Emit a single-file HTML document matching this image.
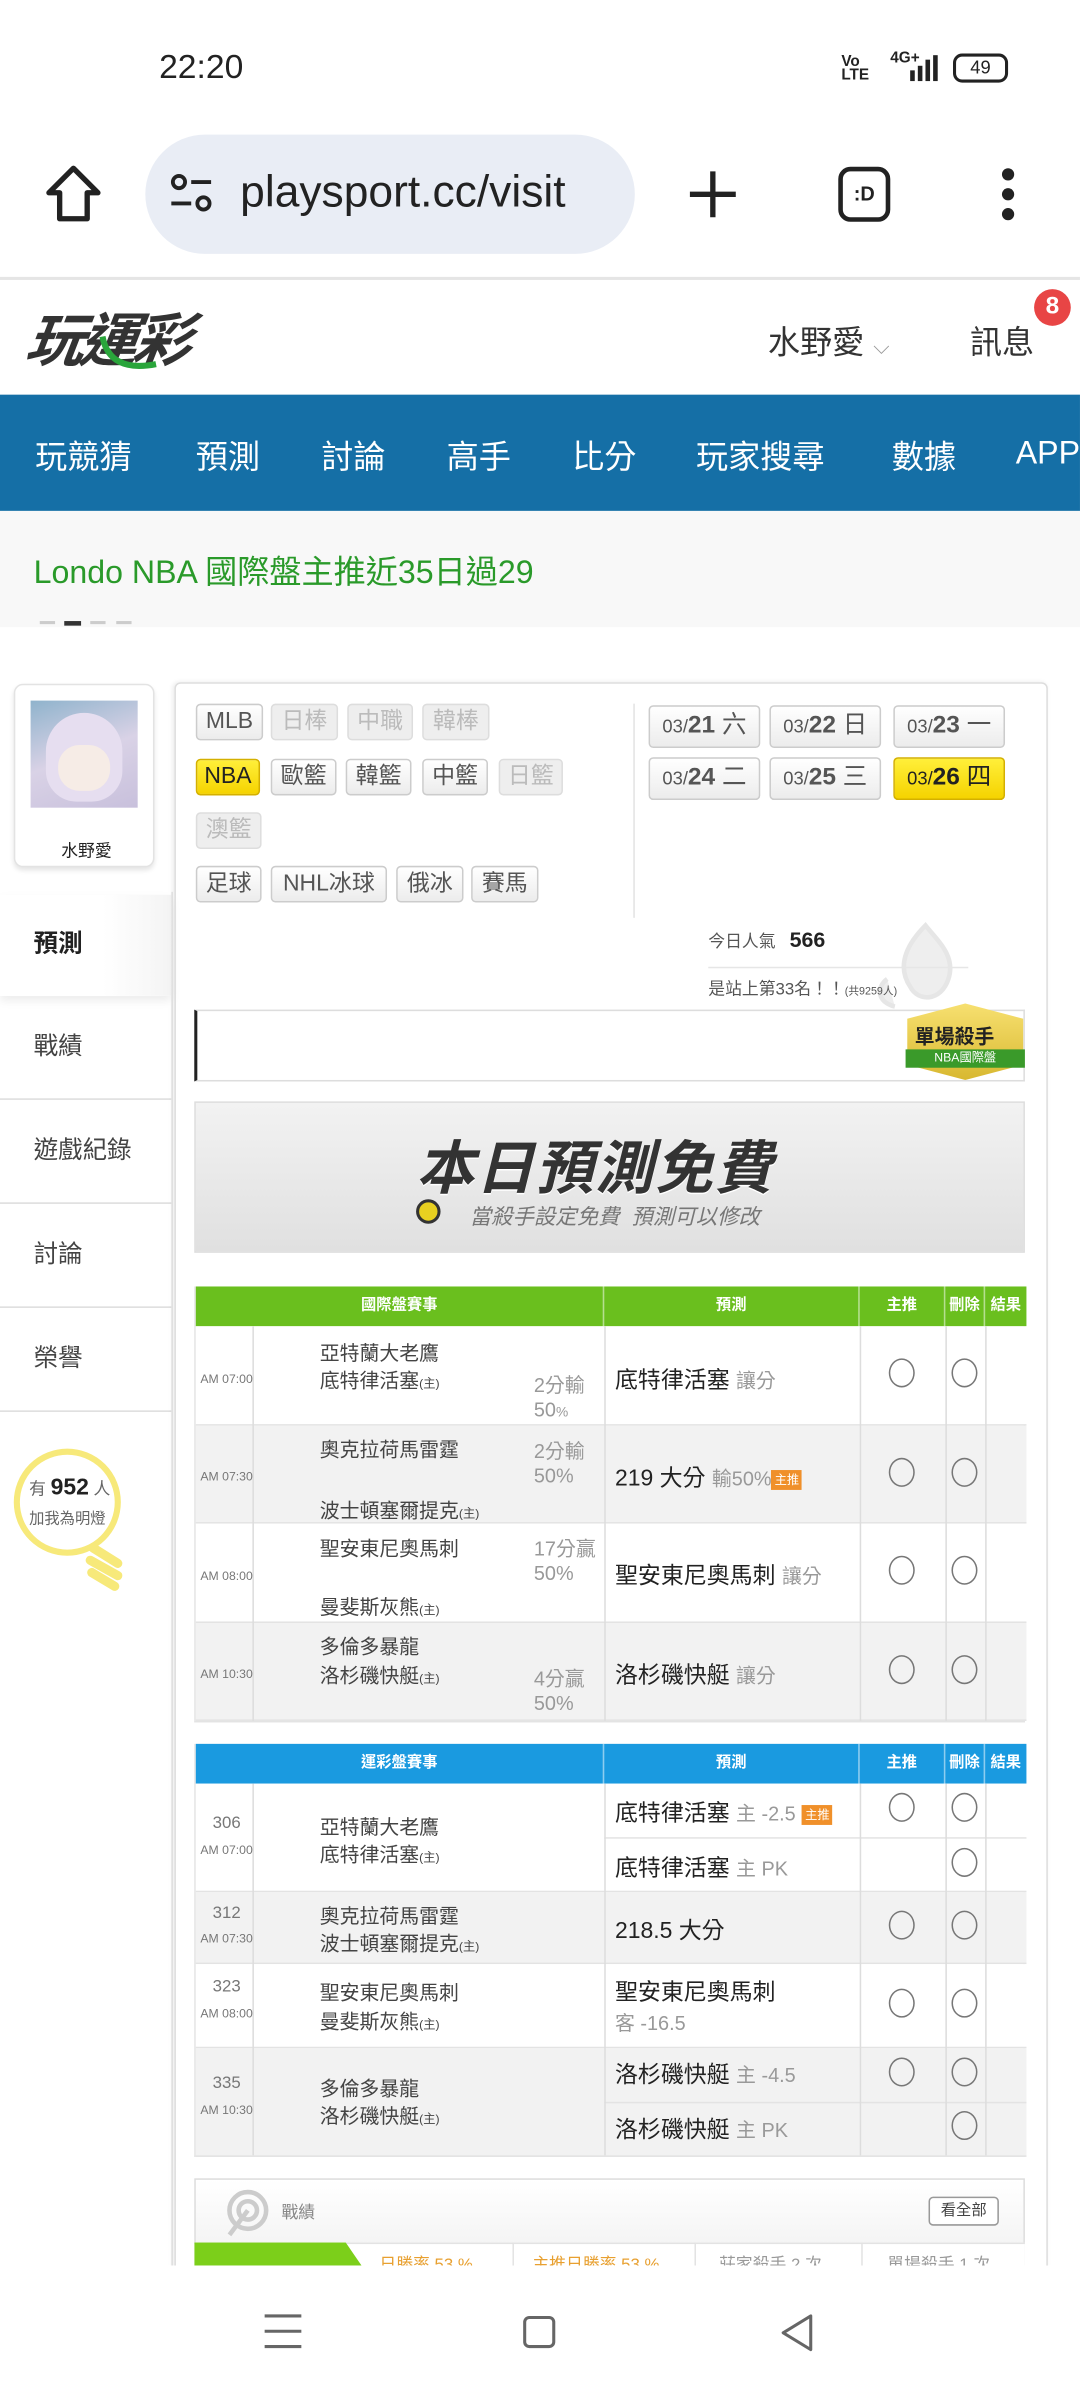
<!DOCTYPE html>
<html><head><meta charset="utf-8">
<style>
*{margin:0;padding:0;box-sizing:border-box}
html,body{width:1080px;height:2400px;overflow:hidden;background:#fff}
#w{position:absolute;left:0;top:0;width:706px;height:1569px;transform:scale(1.5297);transform-origin:0 0;font-family:"Liberation Sans","Noto Sans CJK TC",sans-serif;color:#333}
.a{position:absolute;white-space:nowrap}
.btn{position:absolute;height:24px;border:1px solid #ccc;border-radius:3px;background:linear-gradient(#fff,#ececec);font-size:15px;line-height:22px;text-align:center;color:#555}
.dis{color:#bbb;background:#eee;border-color:#ddd}
.yel{background:linear-gradient(#ffef3a,#f5d300)!important;border-color:#d4b000!important;color:#222!important}
.dt{position:absolute;height:28px;width:73px;border:1px solid #ccc;border-radius:3px;background:linear-gradient(#fff,#ececec);font-size:16px;line-height:26px;text-align:center;color:#555}
.dt small{font-size:12px}
.menu{position:absolute;left:0;width:112px;border-bottom:1px solid #ddd;font-size:16px;color:#444;padding-left:22px}
.tbl{position:absolute;left:127px;width:543px}
.hd{position:absolute;height:26px;color:#fff;font-size:10px;font-weight:bold;text-align:center;line-height:26px;border-right:1px solid rgba(255,255,255,.5)}
.row{position:absolute;left:0;width:543px;border-bottom:1px solid #e3e3e3}
.vl{position:absolute;top:0;bottom:0;width:1px;background:#ddd}
.c{position:absolute;width:17px;height:19px;border:1.5px solid #777;border-radius:50%}
.t{font-size:8px;color:#777}
.tm{font-size:13px;color:#444}
.tm s{text-decoration:none;font-size:8px}
.pr{font-size:15px;color:#222}
.g{color:#999}
.tag{display:inline-block;font-size:8px;background:#f0902a;color:#fff;padding:1px 2px;vertical-align:middle}
.nv{position:absolute;top:283px;font-size:21px;color:#fff;white-space:nowrap}
</style></head><body><div id="w">
<!-- status -->
<div class="a" style="left:104px;top:31px;font-size:22px;color:#222">22:20</div>
<div class="a" style="left:550px;top:36px;font-size:10px;font-weight:bold;line-height:9px;color:#222">Vo<br>LTE</div>
<div class="a" style="left:582px;top:33px;font-size:10px;font-weight:bold;color:#222">4G+</div>
<svg class="a" style="left:594px;top:36px" width="20" height="18"><rect x="1" y="10" width="3" height="7" fill="#222"/><rect x="6" y="7" width="3" height="10" fill="#222"/><rect x="11" y="3" width="3" height="14" fill="#222"/><rect x="16" y="0" width="3" height="17" fill="#222"/></svg>
<div class="a" style="left:623px;top:35px;width:36px;height:19px;border:2px solid #222;border-radius:6px;font-size:12px;text-align:center;line-height:15px;color:#222">49</div>
<!-- browser bar -->
<svg class="a" style="left:28px;top:106px" width="40" height="42"><path d="M20 4 L36 20 H29 V37 H11 V20 H4 Z" fill="none" stroke="#222" stroke-width="3.5" stroke-linejoin="round"/></svg>
<div class="a" style="left:95px;top:88px;width:320px;height:78px;border-radius:39px;background:#e9edf5"></div>
<svg class="a" style="left:110px;top:113px" width="32" height="28"><circle cx="7" cy="6" r="4" fill="none" stroke="#222" stroke-width="2.5"/><line x1="15" y1="6" x2="28" y2="6" stroke="#222" stroke-width="2.5"/><line x1="2" y1="20" x2="15" y2="20" stroke="#222" stroke-width="2.5"/><circle cx="23" cy="20" r="4" fill="none" stroke="#222" stroke-width="2.5"/></svg>
<div class="a" style="left:157px;top:110px;font-size:29px;color:#222;width:244px;overflow:hidden">playsport.cc/visit</div>
<svg class="a" style="left:449px;top:110px" width="34" height="34"><path d="M17 2V32M2 17H32" stroke="#222" stroke-width="3.5"/></svg>
<div class="a" style="left:548px;top:109px;width:34px;height:36px;border:3.5px solid #222;border-radius:8px;font-size:13px;font-weight:bold;text-align:center;line-height:29px;color:#222">:D</div>
<svg class="a" style="left:652px;top:109px" width="14" height="36"><circle cx="7" cy="5" r="4" fill="#222"/><circle cx="7" cy="18" r="4" fill="#222"/><circle cx="7" cy="31" r="4" fill="#222"/></svg>
<div class="a" style="left:0;top:181px;width:706px;height:2px;background:#e5e5e5"></div>
<!-- header -->
<div class="a" style="left:18px;top:192px;font-size:38px;font-weight:bold;font-style:italic;color:#333;letter-spacing:-3px;transform:skewX(-8deg)">玩運彩</div>
<svg class="a" style="left:62px;top:218px" width="50" height="30"><path d="M5 2 C8 18 20 24 40 20" fill="none" stroke="#2aa53b" stroke-width="4"/></svg>
<div class="a" style="left:502px;top:208px;font-size:21px;color:#333">水野愛 <span style="font-size:14px;color:#999">⌵</span></div>
<div class="a" style="left:634px;top:208px;font-size:21px;color:#333">訊息</div>
<div class="a" style="left:676px;top:189px;width:24px;height:24px;border-radius:12px;background:#e84545;color:#fff;font-size:16px;font-weight:bold;text-align:center;line-height:24px">8</div>
<!-- nav -->
<div class="a" style="left:0;top:258px;width:706px;height:76px;background:#156fa6"></div>
<div class="nv" style="left:23px">玩競猜</div>
<div class="nv" style="left:128px">預測</div>
<div class="nv" style="left:210px">討論</div>
<div class="nv" style="left:292px">高手</div>
<div class="nv" style="left:374px">比分</div>
<div class="nv" style="left:455px">玩家搜尋</div>
<div class="nv" style="left:583px">數據</div>
<div class="nv" style="left:664px;top:285px">APP</div>
<!-- banner -->
<div class="a" style="left:0;top:334px;width:706px;height:76px;background:#f8f8f8"></div>
<div class="a" style="left:22px;top:358px;font-size:21px;color:#2a9a2a">Londo NBA 國際盤主推近35日過29</div>
<div class="a" style="left:26px;top:406px;width:10px;height:2px;background:#ccc"></div>
<div class="a" style="left:42px;top:406px;width:11px;height:3px;background:#333"></div>
<div class="a" style="left:59px;top:406px;width:10px;height:2px;background:#ccc"></div>
<div class="a" style="left:76px;top:406px;width:10px;height:2px;background:#ccc"></div>
<!-- sidebar -->
<div class="a" style="left:9px;top:447px;width:92px;height:120px;border:1px solid #e3e3e3;border-radius:6px;box-shadow:0 2px 3px rgba(0,0,0,.1);background:#fff"></div>
<div class="a" style="left:20px;top:458px;width:70px;height:70px;background:linear-gradient(160deg,#8fb3cc,#d9d2e6 50%,#c8c0dc)"></div>
<div class="a" style="left:30px;top:466px;width:50px;height:58px;border-radius:25px 25px 20px 20px;background:#e6def0"></div>
<div class="a" style="left:38px;top:487px;width:34px;height:30px;border-radius:14px;background:#f6ece6"></div>
<div class="a" style="left:40px;top:548px;font-size:11px;color:#222">水野愛</div>
<div class="menu" style="top:585px;height:66px;line-height:66px;font-weight:bold;color:#222;background:linear-gradient(90deg,#fff 60%,#f4f4f4);box-shadow:0 3px 6px rgba(0,0,0,.08);border:none">預測</div>
<div class="menu" style="top:651px;height:68px;line-height:68px">戰績</div>
<div class="menu" style="top:719px;height:68px;line-height:68px">遊戲紀錄</div>
<div class="menu" style="top:787px;height:68px;line-height:68px">討論</div>
<div class="menu" style="top:855px;height:68px;line-height:68px">榮譽</div>
<div class="a" style="left:112px;top:583px;width:1px;height:900px;background:#e6e6e6"></div>
<svg class="a" style="left:5px;top:943px" width="85" height="105"><circle cx="39" cy="39" r="33" fill="none" stroke="#f7e97a" stroke-width="4"/><g stroke="#f7e97a" stroke-width="6" stroke-linecap="round"><line x1="56" y1="69" x2="72" y2="79"/><line x1="54" y1="77" x2="72" y2="87"/><line x1="55" y1="85" x2="70" y2="94"/></g></svg>
<div class="a" style="left:19px;top:964px;font-size:11px;color:#666">有 <b style="font-size:15px;color:#222">952</b> 人</div>
<div class="a" style="left:19px;top:984px;font-size:10px;color:#666">加我為明燈</div>
<!-- main panel -->
<div class="a" style="left:114px;top:446px;width:571px;height:1040px;border:1px solid #ddd;border-radius:4px;box-shadow:-1px 0 3px rgba(0,0,0,.08)"></div>
<div class="btn" style="left:128px;top:460px;width:44px">MLB</div>
<div class="btn dis" style="left:177px;top:460px;width:44px">日棒</div>
<div class="btn dis" style="left:227px;top:460px;width:43px">中職</div>
<div class="btn dis" style="left:276px;top:460px;width:44px">韓棒</div>
<div class="btn yel" style="left:128px;top:496px;width:42px">NBA</div>
<div class="btn" style="left:177px;top:496px;width:43px">歐籃</div>
<div class="btn" style="left:226px;top:496px;width:43px">韓籃</div>
<div class="btn" style="left:276px;top:496px;width:43px">中籃</div>
<div class="btn dis" style="left:326px;top:496px;width:42px">日籃</div>
<div class="btn dis" style="left:128px;top:531px;width:43px">澳籃</div>
<div class="btn" style="left:128px;top:566px;width:43px">足球</div>
<div class="btn" style="left:177px;top:566px;width:76px">NHL冰球</div>
<div class="btn" style="left:259px;top:566px;width:44px">俄冰</div>
<div class="btn" style="left:308px;top:566px;width:44px">賽馬</div>
<div class="a" style="left:414px;top:460px;width:1px;height:140px;background:#e3e3e3"></div>
<div class="dt" style="left:424px;top:461px"><small>03/</small><b>21</b> 六</div>
<div class="dt" style="left:503px;top:461px"><small>03/</small><b>22</b> 日</div>
<div class="dt" style="left:584px;top:461px"><small>03/</small><b>23</b> 一</div>
<div class="dt" style="left:424px;top:495px"><small>03/</small><b>24</b> 二</div>
<div class="dt" style="left:503px;top:495px"><small>03/</small><b>25</b> 三</div>
<div class="dt yel" style="left:584px;top:495px"><small>03/</small><b>26</b> 四</div>
<svg class="a" style="left:565px;top:600px" width="75" height="62"><path d="M40 5 C30 15 20 30 30 45 C35 55 50 55 55 40 C60 25 48 15 40 5 Z M15 40 C8 45 8 55 20 58" fill="#eee" stroke="#e6e6e6" stroke-width="3"/></svg>
<div class="a" style="left:463px;top:606px;font-size:11px;color:#555">今日人氣 &nbsp;&nbsp;<b style="font-size:14px;color:#222">566</b></div>
<div class="a" style="left:463px;top:632px;width:170px;height:1px;background:#e6e6e6"></div>
<div class="a" style="left:463px;top:638px;font-size:11px;color:#555">是站上第33名！！<span style="font-size:7px">(共9259人)</span></div>
<div class="a" style="left:127px;top:660px;width:543px;height:47px;border:1px solid #ddd;border-left:2px solid #222;background:#fff"></div>
<div class="a" style="left:593px;top:656px;width:76px;height:50px;background:linear-gradient(#f7e070,#d8b830);clip-path:polygon(50% 0,100% 20%,100% 80%,50% 100%,0 80%,0 20%)"></div>
<div class="a" style="left:598px;top:667px;font-size:13px;font-weight:bold;color:#222">單場殺手</div>
<div class="a" style="left:592px;top:686px;width:78px;height:12px;background:#3a9a2a;color:#fff;font-size:8px;text-align:center;line-height:12px">NBA國際盤</div>
<div class="a" style="left:127px;top:720px;width:543px;height:99px;border:1px solid #ddd;background:linear-gradient(#f2f2f2,#e0e0e0)"></div>
<div class="a" style="left:272px;top:733px;font-size:38px;font-weight:bold;font-style:italic;color:#333;letter-spacing:1px;text-shadow:0 1px 0 #fff">本日預測免費</div>
<div class="a" style="left:272px;top:784px;width:16px;height:16px;border-radius:8px;background:#e8d020;border:2px solid #333"></div>
<div class="a" style="left:307px;top:785px;font-size:14px;font-style:italic;color:#777">當殺手設定免費 &nbsp;預測可以修改</div>
<!-- table 1 -->
<div class="tbl" style="top:841px;height:285px;border:1px solid #e3e3e3;border-top:none">
<div class="hd" style="left:0;top:0;width:267px;background:#6abf1e">國際盤賽事</div>
<div class="hd" style="left:267px;top:0;width:167px;background:#6abf1e">預測</div>
<div class="hd" style="left:434px;top:0;width:56px;background:#6abf1e">主推</div>
<div class="hd" style="left:490px;top:0;width:26px;background:#6abf1e">刪除</div>
<div class="hd" style="left:516px;top:0;width:27px;background:#6abf1e;border:none">結果</div>
<div class="row" style="top:26px;height:65px;background:#fff"></div>
<div class="row" style="top:91px;height:64px;background:#f2f2f2"></div>
<div class="row" style="top:155px;height:65px;background:#fff"></div>
<div class="row" style="top:220px;height:64px;background:#f2f2f2"></div>
<div class="vl" style="left:37px;top:26px"></div><div class="vl" style="left:267px;top:26px"></div><div class="vl" style="left:434px;top:26px"></div><div class="vl" style="left:490px;top:26px"></div><div class="vl" style="left:516px;top:26px"></div>
<div class="a t" style="left:3px;top:56px">AM 07:00</div>
<div class="a tm" style="left:81px;top:33px">亞特蘭大老鷹</div>
<div class="a tm" style="left:81px;top:51px">底特律活塞<s>(主)</s></div>
<div class="a tm g" style="left:221px;top:54px">2分輸<br>50<s style="font-size:9px;text-decoration:none">%</s></div>
<div class="a pr" style="left:274px;top:50px">底特律活塞 <span class="g" style="font-size:13px">讓分</span></div>
<div class="a t" style="left:3px;top:120px">AM 07:30</div>
<div class="a tm" style="left:81px;top:96px">奧克拉荷馬雷霆</div>
<div class="a tm" style="left:81px;top:136px">波士頓塞爾提克<s>(主)</s></div>
<div class="a tm g" style="left:221px;top:97px">2分輸<br>50%</div>
<div class="a pr" style="left:274px;top:114px">219 大分 <span class="g" style="font-size:13px">輸50%</span><span class="tag">主推</span></div>
<div class="a t" style="left:3px;top:185px">AM 08:00</div>
<div class="a tm" style="left:81px;top:161px">聖安東尼奧馬刺</div>
<div class="a tm" style="left:81px;top:199px">曼斐斯灰熊<s>(主)</s></div>
<div class="a tm g" style="left:221px;top:161px">17分贏<br>50%</div>
<div class="a pr" style="left:274px;top:178px">聖安東尼奧馬刺 <span class="g" style="font-size:13px">讓分</span></div>
<div class="a t" style="left:3px;top:249px">AM 10:30</div>
<div class="a tm" style="left:81px;top:225px">多倫多暴龍</div>
<div class="a tm" style="left:81px;top:244px">洛杉磯快艇<s>(主)</s></div>
<div class="a tm g" style="left:221px;top:246px">4分贏<br>50%</div>
<div class="a pr" style="left:274px;top:243px">洛杉磯快艇 <span class="g" style="font-size:13px">讓分</span></div>
<div class="c" style="left:453px;top:47px"></div><div class="c" style="left:494px;top:47px"></div>
<div class="c" style="left:453px;top:112px"></div><div class="c" style="left:494px;top:112px"></div>
<div class="c" style="left:453px;top:176px"></div><div class="c" style="left:494px;top:176px"></div>
<div class="c" style="left:453px;top:241px"></div><div class="c" style="left:494px;top:241px"></div>
</div>
<!-- table 2 -->
<div class="tbl" style="top:1140px;height:270px;border:1px solid #e3e3e3;border-top:none">
<div class="hd" style="left:0;top:0;width:267px;background:#1a9ae0">運彩盤賽事</div>
<div class="hd" style="left:267px;top:0;width:167px;background:#1a9ae0">預測</div>
<div class="hd" style="left:434px;top:0;width:56px;background:#1a9ae0">主推</div>
<div class="hd" style="left:490px;top:0;width:26px;background:#1a9ae0">刪除</div>
<div class="hd" style="left:516px;top:0;width:27px;background:#1a9ae0;border:none">結果</div>
<div class="row" style="top:26px;height:71px;background:#fff"></div>
<div class="a" style="left:267px;top:61px;width:276px;height:1px;background:#e3e3e3"></div>
<div class="row" style="top:97px;height:47px;background:#f2f2f2"></div>
<div class="row" style="top:144px;height:55px;background:#fff"></div>
<div class="row" style="top:199px;height:71px;background:#f2f2f2"></div>
<div class="a" style="left:267px;top:234px;width:276px;height:1px;background:#e3e3e3"></div>
<div class="vl" style="left:37px;top:26px"></div><div class="vl" style="left:267px;top:26px"></div><div class="vl" style="left:434px;top:26px"></div><div class="vl" style="left:490px;top:26px"></div><div class="vl" style="left:516px;top:26px"></div>
<div class="a" style="left:11px;top:46px;font-size:11px;color:#777">306</div><div class="a t" style="left:3px;top:65px">AM 07:00</div>
<div class="a tm" style="left:81px;top:44px">亞特蘭大老鷹</div>
<div class="a tm" style="left:81px;top:62px">底特律活塞<s>(主)</s></div>
<div class="a pr" style="left:274px;top:34px">底特律活塞 <span class="g" style="font-size:13px">主 -2.5</span> <span class="tag">主推</span></div>
<div class="a pr" style="left:274px;top:70px">底特律活塞 <span class="g" style="font-size:13px">主 PK</span></div>
<div class="a" style="left:11px;top:105px;font-size:11px;color:#777">312</div><div class="a t" style="left:3px;top:123px">AM 07:30</div>
<div class="a tm" style="left:81px;top:102px">奧克拉荷馬雷霆</div>
<div class="a tm" style="left:81px;top:120px">波士頓塞爾提克<s>(主)</s></div>
<div class="a pr" style="left:274px;top:111px">218.5 大分</div>
<div class="a" style="left:11px;top:153px;font-size:11px;color:#777">323</div><div class="a t" style="left:3px;top:172px">AM 08:00</div>
<div class="a tm" style="left:81px;top:152px">聖安東尼奧馬刺</div>
<div class="a tm" style="left:81px;top:171px">曼斐斯灰熊<s>(主)</s></div>
<div class="a pr" style="left:274px;top:151px">聖安東尼奧馬刺</div>
<div class="a g" style="left:274px;top:172px;font-size:13px">客 -16.5</div>
<div class="a" style="left:11px;top:216px;font-size:11px;color:#777">335</div><div class="a t" style="left:3px;top:235px">AM 10:30</div>
<div class="a tm" style="left:81px;top:215px">多倫多暴龍</div>
<div class="a tm" style="left:81px;top:233px">洛杉磯快艇<s>(主)</s></div>
<div class="a pr" style="left:274px;top:205px">洛杉磯快艇 <span class="g" style="font-size:13px">主 -4.5</span></div>
<div class="a pr" style="left:274px;top:241px">洛杉磯快艇 <span class="g" style="font-size:13px">主 PK</span></div>
<div class="c" style="left:453px;top:32px"></div><div class="c" style="left:494px;top:32px"></div>
<div class="c" style="left:494px;top:68px"></div>
<div class="c" style="left:453px;top:109px"></div><div class="c" style="left:494px;top:109px"></div>
<div class="c" style="left:453px;top:160px"></div><div class="c" style="left:494px;top:160px"></div>
<div class="c" style="left:453px;top:205px"></div><div class="c" style="left:494px;top:205px"></div>
<div class="c" style="left:494px;top:240px"></div>
</div>
<!-- record box -->
<div class="a" style="left:127px;top:1424px;width:543px;height:60px;border:1px solid #ddd;background:linear-gradient(#fff,#f0f0f0)"></div>
<svg class="a" style="left:146px;top:1431px" width="30" height="32"><circle cx="16" cy="14" r="12" fill="none" stroke="#ccc" stroke-width="3"/><circle cx="16" cy="14" r="6" fill="none" stroke="#ccc" stroke-width="3"/><path d="M16 14 L4 30" stroke="#ccc" stroke-width="3"/></svg>
<div class="a" style="left:184px;top:1438px;font-size:11px;color:#888">戰績</div>
<div class="a" style="left:607px;top:1436px;width:46px;height:19px;border:1px solid #999;border-radius:3px;font-size:10px;text-align:center;line-height:17px;color:#444;background:#fff">看全部</div>
<div class="a" style="left:127px;top:1466px;width:543px;height:16px;background:#fff;border-top:1px solid #e3e3e3"></div>
<div class="a" style="left:127px;top:1466px;width:110px;height:16px;background:#7ccf1a;clip-path:polygon(0 0,90% 0,100% 100%,0 100%)"></div>
<div class="a" style="left:248px;top:1472px;font-size:11px;color:#e8a030">日勝率 53 %</div>
<div class="a" style="left:335px;top:1466px;width:1px;height:16px;background:#e3e3e3"></div>
<div class="a" style="left:348px;top:1472px;font-size:11px;color:#e8a030">主推日勝率 53 %</div>
<div class="a" style="left:454px;top:1466px;width:1px;height:16px;background:#e3e3e3"></div>
<div class="a" style="left:470px;top:1472px;font-size:11px;color:#999">莊家殺手 2 次</div>
<div class="a" style="left:563px;top:1466px;width:1px;height:16px;background:#e3e3e3"></div>
<div class="a" style="left:580px;top:1472px;font-size:11px;color:#999">單場殺手 1 次</div>
<!-- bottom nav -->
<div class="a" style="left:0;top:1481px;width:706px;height:88px;background:#fff"></div>
<svg class="a" style="left:172px;top:1512px" width="26" height="24"><path d="M1 2H25M1 12H25M1 22H25" stroke="#666" stroke-width="2"/></svg>
<div class="a" style="left:342px;top:1514px;width:21px;height:21px;border:2px solid #666;border-radius:4px"></div>
<svg class="a" style="left:509px;top:1512px" width="24" height="26"><path d="M21 2 L3 13 L21 24 Z" fill="none" stroke="#666" stroke-width="2" stroke-linejoin="round"/></svg>
</div></body></html>
